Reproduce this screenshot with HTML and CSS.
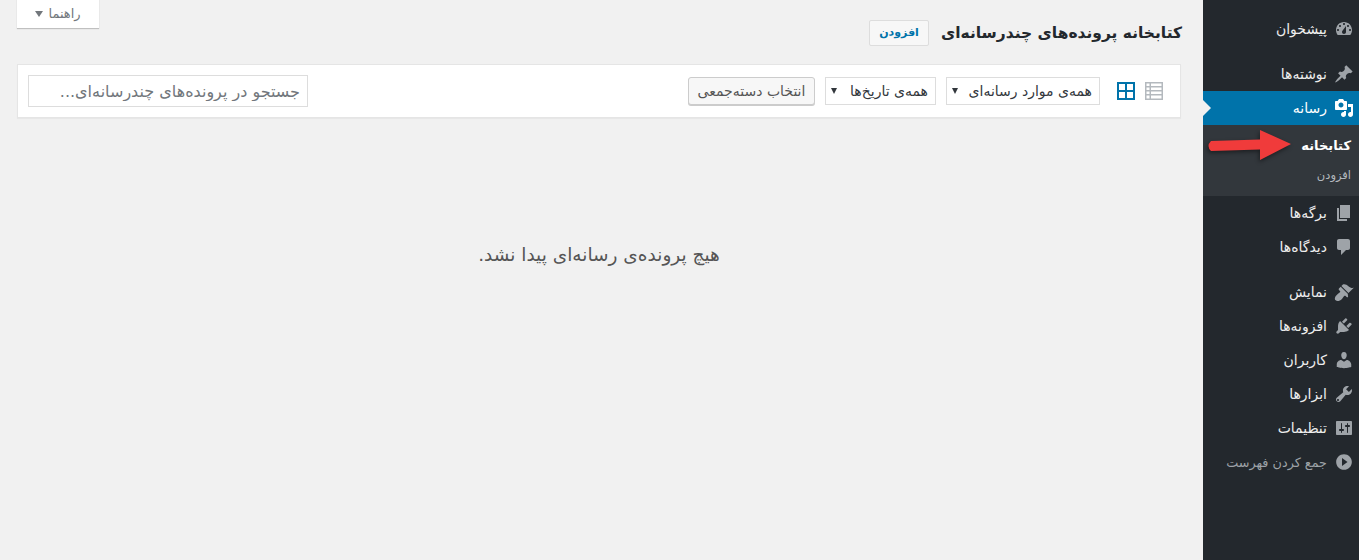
FILE: index.html
```html
<!DOCTYPE html>
<html lang="fa" dir="rtl">
<head>
<meta charset="utf-8">
<title>کتابخانه</title>
<link rel="stylesheet" href="styles.css">
</head>
<body>
<nav class="sidebar">
  <ul class="menu">
    <li class="item"><svg class="icon" viewBox="0 0 20 20"><path d="M3.76 16h12.48c1.1-1.37 1.76-3.11 1.76-5 0-4.42-3.58-8-8-8s-8 3.58-8 8c0 1.89.66 3.63 1.76 5zM10 4c.55 0 1 .45 1 1s-.45 1-1 1-1-.45-1-1 .45-1 1-1zM6 6c.55 0 1 .45 1 1s-.45 1-1 1-1-.45-1-1 .45-1 1-1zm8 0c.55 0 1 .45 1 1s-.45 1-1 1-1-.45-1-1 .45-1 1-1zm-5.37 5.55L12 7v6c0 1.1-.9 2-2 2s-2-.9-2-2c0-.57.24-1.08.63-1.45zM4 10c.55 0 1 .45 1 1s-.45 1-1 1-1-.45-1-1 .45-1 1-1zm12 0c.55 0 1 .45 1 1s-.45 1-1 1-1-.45-1-1 .45-1 1-1z"/></svg><span>پیشخوان</span></li>
    <li class="sep"></li>
    <li class="item"><svg class="icon" viewBox="0 0 20 20"><path d="M10.44 3.02l1.82-1.82 6.36 6.35-1.83 1.82c-1.05-.68-2.48-.57-3.41.36l-.75.75c-.92.93-1.04 2.35-.35 3.41l-1.83 1.82-2.41-2.41-2.8 2.79c-.42.42-3.38 2.71-3.8 2.29s1.86-3.39 2.28-3.81l2.79-2.79L4.1 9.36l1.83-1.82c1.05.69 2.48.57 3.4-.36l.75-.75c.93-.92 1.05-2.35.36-3.41z"/></svg><span>نوشته‌ها</span></li>
    <li class="item active"><svg class="icon" viewBox="0 0 20 20"><path d="M13 11V4c0-.55-.45-1-1-1h-1.67L9 1H5L3.67 3H2c-.55 0-1 .45-1 1v7c0 .55.45 1 1 1h10c.55 0 1-.45 1-1zM7 4.5c1.38 0 2.5 1.12 2.5 2.5S8.38 9.5 7 9.5 4.5 8.38 4.5 7 5.62 4.5 7 4.5zM14 6h5v10.5c0 1.38-1.12 2.5-2.5 2.5S14 17.88 14 16.5s1.12-2.5 2.5-2.5c.17 0 .34.02.5.05V9h-3V6zm-4 8.05V13h2v3.5c0 1.38-1.12 2.5-2.5 2.5S7 17.88 7 16.5 8.12 14 9.5 14c.17 0 .34.02.5.05z"/></svg><span>رسانه</span></li>
    <li class="submenu">
      <a class="sub current">کتابخانه</a>
      <a class="sub">افزودن</a>
    </li>
    <li class="item"><svg class="icon" viewBox="0 0 20 20"><path d="M6 15V2h10v13H6zm-1 1h8v2H3V5h2v11z"/></svg><span>برگه‌ها</span></li>
    <li class="item"><svg class="icon" viewBox="0 0 20 20"><path d="M5 2h9c1.1 0 2 .9 2 2v7c0 1.1-.9 2-2 2h-2l-5 5v-5H5c-1.1 0-2-.9-2-2V4c0-1.1.9-2 2-2z"/></svg><span>دیدگاه‌ها</span></li>
    <li class="sep"></li>
    <li class="item"><svg class="icon" viewBox="0 0 20 20"><path d="M14.48 11.06L7.41 3.99l1.5-1.5c.5-.56 2.3-.47 3.51.32 1.21.8 1.43 1.28 2.91 2.1 1.18.64 2.45 1.26 4.45.85zm-.71.71L6.7 4.7 4.93 6.47c-.39.39-.39 1.02 0 1.41l1.06 1.06c.39.39.39 1.03 0 1.42-.6.6-1.43 1.11-2.21 1.69-.35.26-.7.53-1.01.84C1.43 13.71 0 16.73 1.64 18.36c1.63 1.63 4.65.2 6.04-1.19.31-.31.58-.66.84-1.01.58-.78 1.09-1.61 1.69-2.21.39-.39 1.03-.39 1.42 0l1.06 1.06c.39.39 1.02.39 1.41 0z"/></svg><span>نمایش</span></li>
    <li class="item"><svg class="icon" viewBox="0 0 20 20"><path d="M13.11 4.36L9.87 7.6 8 5.73l3.24-3.24c.35-.34 1.05-.2 1.56.32.52.51.66 1.21.31 1.55zm-8 1.77l.91-1.12 9.01 9.01-1.19.84c-.71.71-2.63 1.16-3.82 1.16H6.14L4.9 17.26c-.59.59-1.54.59-2.12 0-.59-.58-.59-1.53 0-2.12l1.24-1.24v-3.88c0-1.13.4-3.05 1.09-3.89zm7.26 3.97l3.24-3.24c.34-.35 1.04-.21 1.55.31.52.51.66 1.21.31 1.55l-3.24 3.25z"/></svg><span>افزونه‌ها</span></li>
    <li class="item"><svg class="icon" viewBox="0 0 20 20"><path d="M10 9.25c-2.27 0-2.73-3.44-2.73-3.44C7 4.02 7.82 2 9.97 2c2.16 0 2.98 2.02 2.71 3.81 0 0-.41 3.44-2.68 3.44zm0 2.57L12.72 10c2.39 0 4.52 2.33 4.52 4.53v2.49s-3.65 1.13-7.24 1.13c-3.65 0-7.24-1.13-7.24-1.13v-2.49c0-2.25 1.94-4.48 4.47-4.48z"/></svg><span>کاربران</span></li>
    <li class="item"><svg class="icon" viewBox="0 0 20 20"><path fill-rule="evenodd" d="M16.68 9.77c-1.34 1.34-3.3 1.67-4.95.99l-5.41 6.52c-.99.99-2.59.99-3.58 0s-.99-2.59 0-3.57l6.52-5.42c-.68-1.65-.35-3.61 1-4.95 1.28-1.28 3.12-1.62 4.72-1.06l-2.89 2.89 2.82 2.82 2.86-2.87c.53 1.58.18 3.39-1.09 4.66zM4 17c.55 0 1-.45 1-1s-.45-1-1-1-1 .45-1 1 .45 1 1 1z"/></svg><span>ابزارها</span></li>
    <li class="item"><svg class="icon" viewBox="0 0 20 20"><path fill-rule="evenodd" d="M18 16V4c0-.55-.45-1-1-1H3c-.55 0-1 .45-1 1v12c0 .55.45 1 1 1h14c.55 0 1-.45 1-1zM8 11h1c.55 0 1 .45 1 1s-.45 1-1 1H8v1.500c0 .28-.22.5-.5.5s-.5-.22-.5-.5V13H6c-.55 0-1-.45-1-1s.45-1 1-1h1V5.500c0-.28.22-.5.5-.5s.5.22.5.5V11zm5-2h-1c-.55 0-1-.45-1-1s.45-1 1-1h1V5.500c0-.28.22-.5.5-.5s.5.22.5.5V7h1c.55 0 1 .45 1 1s-.45 1-1 1h-1v5.500c0 .28-.22.5-.5.5s-.5-.22-.5-.5V9z"/></svg><span>تنظیمات</span></li>
    <li class="item collapse"><svg class="icon" viewBox="0 0 20 20"><path fill-rule="evenodd" d="M10 2.16c4.33 0 7.84 3.51 7.84 7.84s-3.51 7.84-7.84 7.84S2.16 14.33 2.16 10 5.67 2.16 10 2.16zM8 6v8l5.5-4z"/></svg><span>جمع کردن فهرست</span></li>
  </ul>
  <svg class="red-arrow" viewBox="0 0 86 34" width="86" height="34"><path d="M4 12 L53 10.500 L53 1 L84 15 L53 31 L53 20.500 L4 22 Q-1 17 4 12z"/></svg>
</nav>

<main class="content">
  <header class="top">
    <div class="title-row">
      <h1 class="title">کتابخانه پرونده‌های چندرسانه‌ای</h1>
      <a class="add">افزودن</a>
    </div>
    <div class="help">راهنما <i class="help-caret"></i></div>
  </header>

  <section class="toolbar">
    <div class="filters">
      <div class="views">
        <svg class="view" viewBox="0 0 18 18"><path class="view-list" d="M0 0h18v18H0zM1.500 1.500v2.500h3V1.500zm4.500 0v2.500h10.500V1.500zM1.500 5.500v2.500h3V5.500zm4.500 0v2.500h10.500V5.500zM1.500 9.500v2.500h3V9.500zm4.500 0v2.500h10.500V9.500zM1.500 13.500v3h3v-3zm4.500 0v3h10.500v-3z" fill-rule="evenodd"/></svg>
        <svg class="view" viewBox="0 0 18 18"><path class="view-grid" d="M0 0h18v18H0zM2 2v6h6V2zm8 0v6h6V2zM2 10v6h6v-6zm8 0v6h6v-6z" fill-rule="evenodd"/></svg>
      </div>
      <div class="select select-type"><span>همه‌ی موارد رسانه‌ای</span><i class="caret"></i></div>
      <div class="select select-date"><span>همه‌ی تاریخ‌ها</span><i class="caret"></i></div>
      <button class="bulk" type="button">انتخاب دسته‌جمعی</button>
    </div>
    <input class="search" type="search" placeholder="جستجو در پرونده‌های چندرسانه‌ای...">
  </section>

  <p class="empty">هیچ پرونده‌ی رسانه‌ای پیدا نشد.</p>
</main>
</body>
</html>
```

FILE: styles.css
```css
* { box-sizing: border-box; }

html, body { height: 100%; }

body {
  margin: 0;
  display: flex;
  height: 560px;
  overflow: hidden;
  background: #f1f1f1;
  color: #444;
  font-family: "DejaVu Sans", "Noto Sans", sans-serif;
  font-size: 12px;
}

/* Sidebar */
.sidebar {
  position: relative;
  flex: 0 0 156px;
  background: #23282d;
}

.menu {
  list-style: none;
  margin: 0;
  padding: 12px 0 0;
}

.sep { height: 11px; }

.item {
  position: relative;
  display: flex;
  align-items: center;
  gap: 7px;
  height: 34px;
  padding-right: 5px;
  color: #eee;
  font-size: 14px;
}

.icon {
  flex: none;
  width: 20px;
  height: 20px;
  fill: #9ea3a8;
}

.item.active {
  background: #0073aa;
  color: #fff;
}

.item.active .icon { fill: #fff; }

.item.active::after {
  content: "";
  position: absolute;
  left: 0;
  top: 9px;
  border-style: solid;
  border-width: 8px 0 8px 8px;
  border-color: transparent transparent transparent #f1f1f1;
}

.collapse { color: #9ea3a8; font-size: 12.800px; }

.submenu {
  display: flex;
  flex-direction: column;
  height: 71px;
  padding: 7px 8px 0 0;
  background: #32373c;
}

.sub {
  height: 30px;
  line-height: 30px;
  color: #b4b9be;
  font-size: 11.500px;
}

.sub.current {
  height: 28px;
  line-height: 28px;
  color: #fff;
  font-size: 13px;
  font-weight: 700;
}

.red-arrow {
  position: absolute;
  left: 4px;
  top: 129px;
  fill: #f03b3b;
  filter: drop-shadow(-1px 2px 2px rgba(0, 0, 0, .45));
}

/* Main */
.content {
  flex: 1;
  min-width: 0;
  padding: 0 22px;
}

.top {
  display: flex;
  justify-content: space-between;
  align-items: flex-start;
  height: 64px;
}

.title-row {
  display: flex;
  align-items: center;
  gap: 12px;
  margin-right: -1px;
  padding-top: 20px;
}

.title {
  margin: 0;
  color: #23282d;
  font-size: 15.500px;
  font-weight: 700;
  line-height: 26px;
}

.add {
  display: block;
  width: 60px;
  height: 26px;
  line-height: 24px;
  text-align: center;
  color: #0073aa;
  font-size: 11px;
  font-weight: 700;
  background: #f7f7f7;
  border: 1px solid #ddd;
  border-radius: 2px;
}

.help {
  display: flex;
  align-items: center;
  justify-content: center;
  gap: 5px;
  width: 82px;
  height: 29px;
  margin-top: -1px;
  margin-left: -5px;
  color: #72777c;
  font-size: 13px;
  background: #fff;
  box-shadow: 0 1px 1px rgba(0, 0, 0, .2);
}

.help-caret {
  border-style: solid;
  border-width: 6px 4px 0;
  border-color: #72777c transparent transparent;
}

.toolbar {
  display: flex;
  justify-content: space-between;
  align-items: center;
  height: 54px;
  margin-left: -5px;
  padding: 0 17px 0 10px;
  background: #fff;
  border: 1px solid #e5e5e5;
  box-shadow: 0 1px 1px rgba(0, 0, 0, .04);
}

.filters {
  display: flex;
  align-items: center;
  gap: 10px;
}

.views {
  display: flex;
  gap: 10px;
  margin-left: 7px;
}

.view {
  display: block;
  width: 18px;
  height: 18px;
}

.view-list { fill: #b4b9be; }
.view-grid { fill: #0073aa; }

.select {
  display: flex;
  align-items: center;
  justify-content: space-between;
  height: 28px;
  padding: 0 7px 0 5px;
  color: #32373c;
  font-size: 14px;
  white-space: nowrap;
  background: #fff;
  border: 1px solid #ddd;
}

.select-type { width: 154px; }
.select-date { width: 111px; }

.caret {
  flex: none;
  border-style: solid;
  border-width: 6px 3.500px 0;
  border-color: #32373c transparent transparent;
}

.bulk {
  width: 127px;
  height: 28px;
  padding: 0;
  color: #555;
  font: inherit;
  font-size: 14px;
  white-space: nowrap;
  background: #f7f7f7;
  border: 1px solid #ccc;
  border-radius: 3px;
  box-shadow: 0 1px 0 #ccc;
}

.search {
  width: 280px;
  height: 32px;
  padding: 0 7px;
  color: #32373c;
  font-family: inherit;
  font-size: 16px;
  background: #fff;
  border: 1px solid #ddd;
  outline: 0;
}

.search::placeholder {
  color: #72777c;
  opacity: 1;
}

.empty {
  margin: 125px 0 0 -5px;
  color: #555;
  font-size: 18.500px;
  line-height: 24px;
  text-align: center;
}
```
